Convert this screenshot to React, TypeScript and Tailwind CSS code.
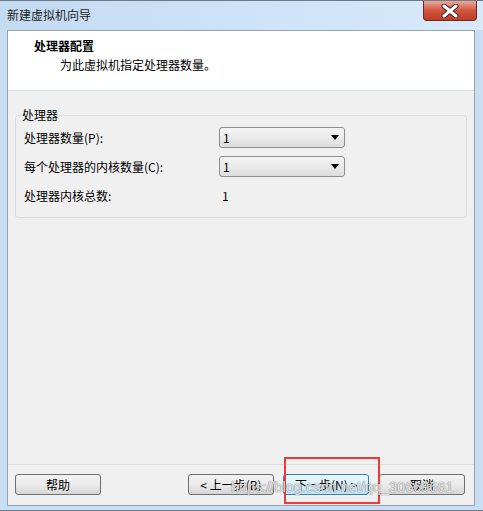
import React from "react";

const font = { fontFamily: '"Noto Sans CJK SC", "Microsoft YaHei", sans-serif' };

function Combo() {
  return (
    <div className="w-[126px] h-[21px] rounded-[3px] border border-[#8e8f8f] bg-gradient-to-b from-[#f3f3f3] via-[#ebebeb] to-[#dcdcdc] flex items-center justify-between pl-[3px] pr-[5px]">
      <span className="text-[12px] text-black leading-none">1</span>
      <svg width="8" height="5" viewBox="0 0 8 5"><path d="M0 0H8L4 5Z" fill="#000" /></svg>
    </div>
  );
}

function Btn({ children, focus }: { children: React.ReactNode; focus?: boolean }) {
  return (
    <div
      className={
        "w-[86px] h-[21px] rounded-[3px] border flex items-center justify-center text-[12px] text-black leading-none whitespace-pre " +
        (focus
          ? "border-[#3c7fb1] bg-gradient-to-b from-[#eaf6fd] via-[#d9f0fc] to-[#bee6fd]"
          : "border-[#707070] bg-gradient-to-b from-[#f2f2f2] via-[#ebebeb] to-[#d6d6d6]")
      }
    >
      {children}
    </div>
  );
}

export default function App() {
  return (
    <div className="relative w-[483px] h-[511px] overflow-hidden bg-[#c9def3] border-t border-[#6b7b8c] flex flex-col" style={font}>
      {/* Title bar */}
      <div className="h-[29px] flex items-start bg-gradient-to-r from-[#c3daf0] via-[#cde3f8] to-[#d8e9f9]">
        <div className="pl-[7px] pt-[6px] text-[12px] text-[#1e1e1e] leading-[16px]">新建虚拟机向导</div>
        <div className="flex-1" />
        <div className="mr-[6px] w-[54px] h-[20px] rounded-b-[4px] border border-t-0 border-[#6d2a22] bg-gradient-to-b from-[#e9a99b] via-[#d0553f] to-[#c23b25] flex items-center justify-center">
          <svg width="18" height="14" viewBox="0 0 18 14">
            <path d="M3 2L15 12M15 2L3 12" stroke="#3b2623" strokeWidth="5" strokeLinecap="round" />
            <path d="M3 2L15 12M15 2L3 12" stroke="#ffffff" strokeWidth="3" strokeLinecap="round" />
          </svg>
        </div>
      </div>

      {/* Client */}
      <div className="ml-[7px] mr-[8px] h-[476px] border border-[#95a3b3] bg-[#f0f0f0] flex flex-col">
        <div className="h-[60px] bg-white border-b border-[#d5dfe5] flex flex-col">
          <div className="pl-[26px] pt-[7px] text-[12px] font-bold text-black leading-[16px]">处理器配置</div>
          <div className="pl-[52px] pt-[3px] text-[12px] text-black leading-[16px]">为此虚拟机指定处理器数量。</div>
        </div>

        <div className="flex-1 px-[7px] pt-[24px]">
          <div className="relative h-[103px] border border-[#dcdcdc] rounded-[3px]">
            <div className="absolute left-[5px] -top-[9px] bg-[#f0f0f0] px-[1px] text-[12px] leading-[16px] text-black">处理器</div>
            <div className="flex flex-col pt-[11px] pl-[8px]">
              <div className="flex items-center h-[21px]">
                <span className="w-[195px] text-[12px] text-black">处理器数量(P):</span>
                <Combo />
              </div>
              <div className="flex items-center h-[21px] mt-[8px]">
                <span className="w-[195px] text-[12px] text-black">每个处理器的内核数量(C):</span>
                <Combo />
              </div>
              <div className="flex items-center h-[21px] mt-[8px]">
                <span className="w-[198px] text-[12px] text-black">处理器内核总数:</span>
                <span className="text-[12px] text-black">1</span>
              </div>
            </div>
          </div>
        </div>

        <div className="h-[41px] border-t border-[#dfdfdf] flex items-start pt-[9px] pl-[7px] pr-[9px]">
          <Btn>帮助</Btn>
          <div className="flex-1" />
          <div className="flex gap-[9px]">
            <Btn>{"< 上一步(B)"}</Btn>
            <Btn focus>{"下一步(N) >"}</Btn>
            <div className="ml-[1px]"><Btn>取消</Btn></div>
          </div>
        </div>
      </div>
      <div className="flex-1 border-b border-[#6b7b8c]" />

      {/* Overlays */}
      <div className="absolute left-[284px] top-[456px] w-[96px] h-[47px] border-2 border-[#ee3a3a]" />
      <div
        className="absolute left-[231px] top-[477px] text-[14.5px] leading-[18px] text-white/80 whitespace-nowrap"
        style={{ fontFamily: '"Liberation Sans", Arial, sans-serif', textShadow: "0 0 1px rgba(90,90,90,0.8), 0 0 1px rgba(90,90,90,0.6)" }}
      >
        https://blog.csdn.net/qq_30669661
      </div>
    </div>
  );
}
